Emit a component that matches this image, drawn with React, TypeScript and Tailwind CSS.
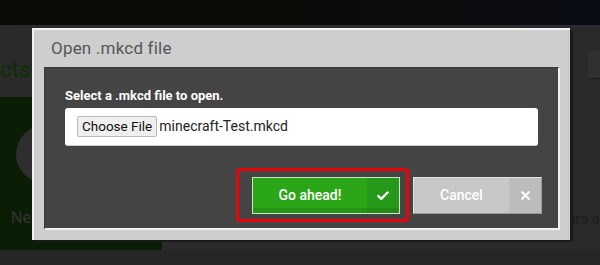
import { Check, X } from 'lucide-react';

function Background() {
  return (
    <div className="flex flex-col w-[600px] h-[265px] bg-[#2a2a2a] overflow-hidden">
      {/* Dim hero strip */}
      <div className="h-[25px] bg-gradient-to-r from-[#0a0a07] via-[#0b0c08] to-[#0a0d14]" />

      {/* Section header */}
      <div className="flex items-start justify-between h-[72px] pt-[32px]">
        <h2 className="ml-0 text-[22px] leading-[26px] text-[#0b2e07] font-normal">cts</h2>
        <div className="mt-[-7px] w-[12px] h-[29px] bg-[#303030] border-b border-[#1a1a1a] rounded-tl-[3px]" />
      </div>

      <div className="flex flex-1 items-start">
        {/* New project card */}
        <div className="relative w-[162px] h-[153px] bg-[#0a1d05]">
          <div className="absolute left-[16px] top-[28px] w-[58px] h-[58px] rounded-full bg-[#2e2e2e]" />
          <div className="absolute left-[11px] top-[109px] text-[16px] text-[#333] whitespace-nowrap">New</div>
        </div>
        <div className="flex-1 relative h-[153px]">
          <div className="absolute right-0 top-[111px] text-[15px] text-[#1c1c1c] whitespace-nowrap">ours a</div>
        </div>
      </div>
      <div className="h-[15px] bg-[#262626]" />
    </div>
  );
}

function Dialog() {
  return (
    <div className="absolute left-[32px] top-[28px] w-[538px] h-[212px] flex flex-col bg-[#cecece] border-t-2 border-l-2 border-[#f2f2f2] shadow-[3px_2px_0_#1b1b1b]">
      <div className="h-[37px] flex items-center pl-[17px] text-[17px] text-[#555] tracking-[0.2px]">Open .mkcd file</div>

      <div className="flex-1 flex flex-col ml-[10px] mr-[10px] mb-[10px] bg-[#444] border-t border-l border-[#3a3a3a] border-r-2 border-b-2 border-r-[#f0f0f0] border-b-[#f0f0f0]">
        <p className="pl-[20px] pt-[18px] text-[13px] leading-[19px] font-bold text-white">Select a .mkcd file to open.</p>

        <div className="mx-[20px] mt-[3px] h-[38px] flex items-center pl-[12px] gap-[2px] bg-white rounded-[3px] border-b border-[#ccc]">
          <span className="h-[21px] px-[4px] flex items-center text-[13.5px] text-[#111] bg-[#efefef] border border-[#b9b9b9] rounded-[2px]">Choose File</span>
          <span className="text-[14px] text-[#222]">minecraft-Test.mkcd</span>
        </div>

        <div className="flex justify-end gap-[13px] pr-[16px] mt-[31px]">
          <div className="relative">
            <div className="absolute -left-[16px] -top-[9px] -right-[9px] -bottom-[8px] border-[3px] border-[#e8040a] rounded-[4px]" />
            <button className="relative flex w-[148px] h-[37px] border border-[#cfe6c8] bg-[#2ba617] text-white overflow-hidden">
              <span className="flex-1 h-full flex items-center justify-center text-[14px] font-medium">Go ahead!</span>
              <span className="w-[32px] h-full flex items-center justify-center bg-[#27991a]">
                <Check size={14} strokeWidth={4} />
              </span>
              <span className="absolute left-0 right-0 bottom-0 h-[5px] bg-[#000]/10" />
            </button>
          </div>
          <button className="relative flex w-[129px] h-[37px] border border-[#e2e2e2] border-b-[#9a9a9a] border-r-[#9a9a9a] bg-[#c7c7c7] text-white">
            <span className="flex-1 h-full flex items-center justify-center text-[14px] font-medium">Cancel</span>
            <span className="w-[32px] h-full flex items-center justify-center bg-[#bcbcbc]">
              <X size={13} strokeWidth={4} />
            </span>
          </button>
        </div>
      </div>
    </div>
  );
}

export default function App() {
  return (
    <div className="relative w-[600px] h-[265px] overflow-hidden font-['Roboto',sans-serif]">
      <Background />
      <Dialog />
    </div>
  );
}
